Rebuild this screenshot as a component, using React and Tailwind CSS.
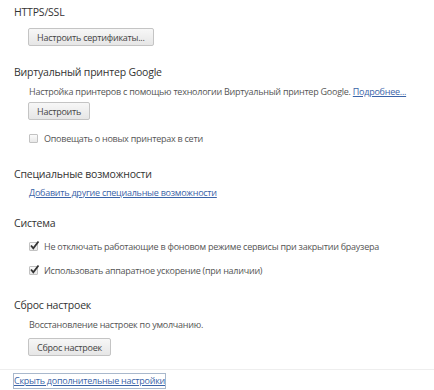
import React from "react";

const font = { fontFamily: '"Open Sans", "Noto Sans", sans-serif' };

function Btn({ children }) {
  return (
    <div className="flex items-center h-[18px] px-[8px] border border-[#c4c4c4] rounded-[2px] bg-gradient-to-b from-[#f7f7f7] to-[#e6e6e6] text-[9px] tracking-[-0.25px] text-[#444] leading-none">
      {children}
    </div>
  );
}

function Check({ checked, children, className = "" }) {
  return (
    <div className={`flex items-center h-[16px] pl-[15px] ${className}`}>
      <div className="relative w-[9px] h-[9px] border border-[#c2c2c2] rounded-[1px] bg-gradient-to-b from-[#fafafa] to-[#e8e8e8]">
        {checked && (
          <svg
            className="absolute left-[-1px] top-[-3px]"
            width="11"
            height="11"
            viewBox="0 0 11 11"
          >
            <path d="M2 5.5 L4.3 8.3 L9.5 1.5" stroke="#333" strokeWidth="1.8" fill="none" />
          </svg>
        )}
      </div>
      <span className="ml-[6px] text-[9px] tracking-[-0.25px] text-[#555] whitespace-nowrap">{children}</span>
    </div>
  );
}

function H({ children, className = "" }) {
  return (
    <div className={`h-[16px] leading-[16px] text-[10.5px] tracking-[-0.2px] text-[#333] ${className}`}>{children}</div>
  );
}

function P({ children, className = "" }) {
  return (
    <div className={`h-[16px] leading-[16px] pl-[15px] text-[9px] tracking-[-0.25px] text-[#555] whitespace-nowrap ${className}`}>
      {children}
    </div>
  );
}

export default function App() {
  return (
    <div className="w-[434px] h-[390px] bg-white overflow-hidden leading-none" style={font}>
      <div className="pl-[14px] pt-[4px]">
        <H>HTTPS/SSL</H>
        <div className="flex pl-[14px] mt-[8px]">
          <Btn>Настроить сертификаты...</Btn>
        </div>

        <H className="mt-[18px]">Виртуальный принтер Google</H>
        <P className="mt-[4px]">
          Настройка принтеров с помощью технологии Виртуальный принтер Google.{" "}
          <span className="text-[#3b64a8] underline">Подробнее...</span>
        </P>
        <div className="flex pl-[14px] mt-[2px]">
          <Btn>Настроить</Btn>
        </div>
        <Check className="mt-[10px]">Оповещать о новых принтерах в сети</Check>

        <H className="mt-[20px]">Специальные возможности</H>
        <P className="mt-[3px]">
          <span className="text-[#3b64a8] underline">Добавить другие специальные возможности</span>
        </P>

        <H className="mt-[14px]">Система</H>
        <Check checked className="mt-[7px]">
          Не отключать работающие в фоновом режиме сервисы при закрытии браузера
        </Check>
        <Check checked className="mt-[8px]">
          Использовать аппаратное ускорение (при наличии)
        </Check>

        <H className="mt-[19px]">Сброс настроек</H>
        <P className="mt-[4px]">Восстановление настроек по умолчанию.</P>
        <div className="flex pl-[14px] mt-[5px]">
          <Btn>Сброс настроек</Btn>
        </div>
      </div>
      <div className="mt-[13px] h-px bg-[#eeeeee]" />
      <div className="flex pl-[13px] mt-[3px]">
        <span className="h-[16px] leading-[14px] border border-[#a9b8cc] text-[9px] tracking-[-0.25px] text-[#3b64a8] underline">
          Скрыть дополнительные настройки
        </span>
      </div>
    </div>
  );
}
